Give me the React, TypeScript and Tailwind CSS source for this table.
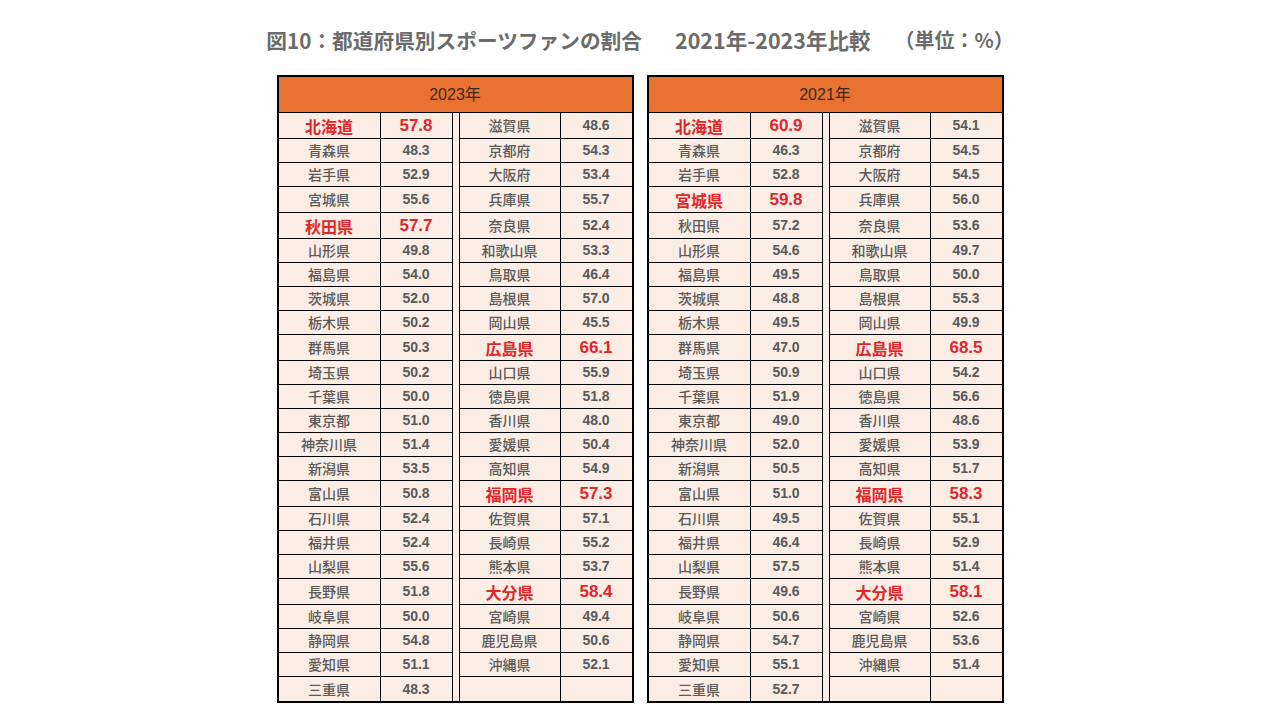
import clsx from "clsx";

type Entry = [name: string, value: string, hi?: boolean];

type YearTable = {
  year: string;
  left: Entry[];
  right: Entry[];
};

// 赤字の行（どちらかの表に強調セルがある行）は少し高い
const TALL_ROWS = [0, 3, 4, 9, 15, 19];

const TABLES: YearTable[] = [
  {
    year: "2023年",
    left: [
      ["北海道", "57.8", true],
      ["青森県", "48.3"],
      ["岩手県", "52.9"],
      ["宮城県", "55.6"],
      ["秋田県", "57.7", true],
      ["山形県", "49.8"],
      ["福島県", "54.0"],
      ["茨城県", "52.0"],
      ["栃木県", "50.2"],
      ["群馬県", "50.3"],
      ["埼玉県", "50.2"],
      ["千葉県", "50.0"],
      ["東京都", "51.0"],
      ["神奈川県", "51.4"],
      ["新潟県", "53.5"],
      ["富山県", "50.8"],
      ["石川県", "52.4"],
      ["福井県", "52.4"],
      ["山梨県", "55.6"],
      ["長野県", "51.8"],
      ["岐阜県", "50.0"],
      ["静岡県", "54.8"],
      ["愛知県", "51.1"],
      ["三重県", "48.3"],
    ],
    right: [
      ["滋賀県", "48.6"],
      ["京都府", "54.3"],
      ["大阪府", "53.4"],
      ["兵庫県", "55.7"],
      ["奈良県", "52.4"],
      ["和歌山県", "53.3"],
      ["鳥取県", "46.4"],
      ["島根県", "57.0"],
      ["岡山県", "45.5"],
      ["広島県", "66.1", true],
      ["山口県", "55.9"],
      ["徳島県", "51.8"],
      ["香川県", "48.0"],
      ["愛媛県", "50.4"],
      ["高知県", "54.9"],
      ["福岡県", "57.3", true],
      ["佐賀県", "57.1"],
      ["長崎県", "55.2"],
      ["熊本県", "53.7"],
      ["大分県", "58.4", true],
      ["宮崎県", "49.4"],
      ["鹿児島県", "50.6"],
      ["沖縄県", "52.1"],
      ["", ""],
    ],
  },
  {
    year: "2021年",
    left: [
      ["北海道", "60.9", true],
      ["青森県", "46.3"],
      ["岩手県", "52.8"],
      ["宮城県", "59.8", true],
      ["秋田県", "57.2"],
      ["山形県", "54.6"],
      ["福島県", "49.5"],
      ["茨城県", "48.8"],
      ["栃木県", "49.5"],
      ["群馬県", "47.0"],
      ["埼玉県", "50.9"],
      ["千葉県", "51.9"],
      ["東京都", "49.0"],
      ["神奈川県", "52.0"],
      ["新潟県", "50.5"],
      ["富山県", "51.0"],
      ["石川県", "49.5"],
      ["福井県", "46.4"],
      ["山梨県", "57.5"],
      ["長野県", "49.6"],
      ["岐阜県", "50.6"],
      ["静岡県", "54.7"],
      ["愛知県", "55.1"],
      ["三重県", "52.7"],
    ],
    right: [
      ["滋賀県", "54.1"],
      ["京都府", "54.5"],
      ["大阪府", "54.5"],
      ["兵庫県", "56.0"],
      ["奈良県", "53.6"],
      ["和歌山県", "49.7"],
      ["鳥取県", "50.0"],
      ["島根県", "55.3"],
      ["岡山県", "49.9"],
      ["広島県", "68.5", true],
      ["山口県", "54.2"],
      ["徳島県", "56.6"],
      ["香川県", "48.6"],
      ["愛媛県", "53.9"],
      ["高知県", "51.7"],
      ["福岡県", "58.3", true],
      ["佐賀県", "55.1"],
      ["長崎県", "52.9"],
      ["熊本県", "51.4"],
      ["大分県", "58.1", true],
      ["宮崎県", "52.6"],
      ["鹿児島県", "53.6"],
      ["沖縄県", "51.4"],
      ["", ""],
    ],
  },
];

function NameCell({ entry, width, last }: { entry: Entry; width: string; last: boolean }) {
  const [name, , hi] = entry;
  return (
    <div
      className={clsx(
        "flex items-center justify-center border-r border-black font-['Noto_Sans_CJK_JP',sans-serif]",
        width,
        !last && "border-b",
        hi ? "text-[16px] font-bold text-[#e0262b]" : "text-[14px] font-medium text-[#595959]"
      )}
    >
      {name}
    </div>
  );
}

function ValueCell({ entry, width, last }: { entry: Entry; width: string; last: boolean }) {
  const [, value, hi] = entry;
  return (
    <div
      className={clsx(
        "flex items-center justify-center border-black font-['Liberation_Sans',sans-serif] font-bold",
        width,
        !last && "border-b",
        hi ? "text-[17px] text-[#e0262b]" : "text-[14px] text-[#595959]"
      )}
    >
      {value}
    </div>
  );
}

function Table({ table }: { table: YearTable }) {
  return (
    <div className="w-[357px] border-2 border-black bg-[#fcede4]">
      <div className="flex h-[36px] items-center justify-center border-b border-black bg-[#e97132] font-['Liberation_Sans','Noto_Sans_CJK_JP',sans-serif] text-[16px] text-[#3a2a20]">
        {table.year}
      </div>

      {table.left.map((left, i) => {
        const last = i === table.left.length - 1;
        return (
          <div
            key={left[0]}
            className={clsx("flex", TALL_ROWS.includes(i) ? "h-[26px]" : "h-[24px]")}
          >
            <NameCell entry={left} width="w-[102px]" last={last} />
            <ValueCell entry={left} width="w-[71px]" last={last} />
            {/* 二重線の仕切り */}
            <div className="w-[8px] border-x border-black" />
            <NameCell entry={table.right[i]} width="w-[101px]" last={last} />
            <ValueCell entry={table.right[i]} width="w-[71px]" last={last} />
          </div>
        );
      })}
    </div>
  );
}

export default function App() {
  return (
    <div className="min-h-[720px] bg-white">
      <div className="mx-auto w-[727px] pt-[26px]">
        <h1 className="mb-[21px] flex h-[28px] items-center justify-center whitespace-nowrap font-['Noto_Sans_CJK_JP',sans-serif] text-[20.7px] font-bold leading-[28px] text-[#6b6b6b]">
          <span>図10：都道府県別スポーツファンの割合</span>
          <span className="ml-[33px] text-[21.5px]">2021年-2023年比較</span>
          <span className="ml-[24px] text-[20px]">（単位：%）</span>
        </h1>

        <div className="flex justify-between">
          {TABLES.map((t) => (
            <Table key={t.year} table={t} />
          ))}
        </div>
      </div>
    </div>
  );
}
